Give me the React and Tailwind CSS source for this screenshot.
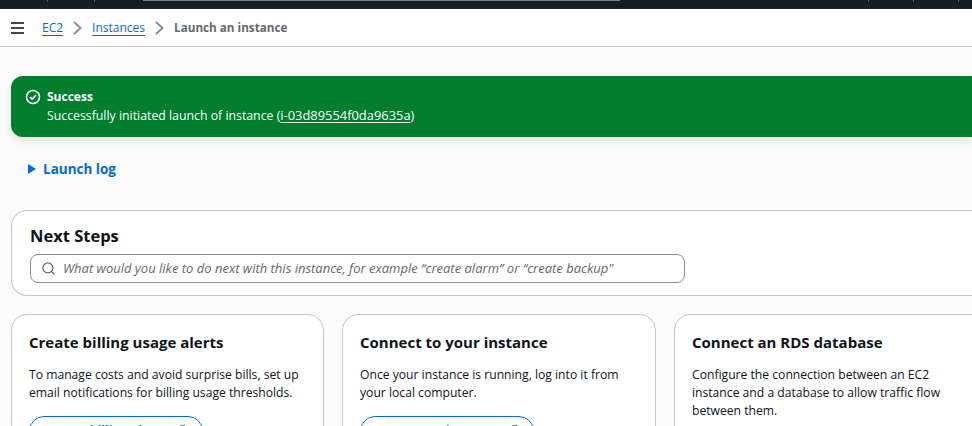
import { Search, ExternalLink } from 'lucide-react'

const Chevron = () => (
  <svg width="9" height="14" viewBox="0 0 9 14" fill="none" stroke="#8c8c94" strokeWidth="2" className="mx-[10px] shrink-0">
    <path d="M1 1l6.5 6L1 13" />
  </svg>
)

const Card = ({ title, children, button }) => (
  <div className="min-w-0 bg-white border border-[#c6c6cd] rounded-[16px] pl-[17px] pr-[14px] pt-[17px] h-[140px] overflow-hidden">
    <h3 className="text-[15px] leading-[20px] font-bold text-[#0f141a]">{title}</h3>
    <p className="mt-[14px] text-[12.15px] leading-[18px] text-[#0f141a]">{children}</p>
    {button && (
      <div className="mt-[14px] w-[174px] h-[30px] rounded-full border-[1.5px] border-[#006ce0] flex items-start justify-center gap-[6px] pt-[5px] text-[12.3px] leading-[18px] font-bold text-[#006ce0]">
        {button}
        <ExternalLink size={14} strokeWidth={2} className="mt-[2px]" />
      </div>
    )}
  </div>
)

export default function App() {
  return (
    <div className="w-[972px] h-[426px] overflow-hidden bg-[#fbfbfc] font-['Open_Sans',sans-serif]">
      <div className="h-[9px] bg-[#161d26] flex">
        <div className="ml-[47px] w-px h-[2px] bg-[#545b64]" />
        <div className="ml-[46px] w-px h-[2px] bg-[#545b64]" />
        <div className="ml-[48px] w-[477px] h-px bg-[#777f8a]" />
        <div className="ml-[248px] w-px h-[2px] bg-[#545b64]" />
        <div className="ml-[44px] w-px h-[2px] bg-[#545b64]" />
        <div className="ml-[44px] w-px h-[2px] bg-[#545b64]" />
      </div>
      <div className="h-[38px] bg-white border-b border-[#c6c6cd] flex items-center pl-[11px] text-[12px]">
        <svg width="13" height="12" viewBox="0 0 13 12" fill="none" stroke="#424650" strokeWidth="2" className="shrink-0">
          <path d="M0 1h13M0 6h13M0 11h13" />
        </svg>
        <a className="ml-[18px] text-[#006ce0] underline underline-offset-[3px]">EC2</a>
        <Chevron />
        <a className="text-[#006ce0] underline underline-offset-[3px]">Instances</a>
        <Chevron />
        <span className="font-bold text-[#656871] text-[11.7px]">Launch an instance</span>
      </div>

      <div className="pl-[11px] pt-[29px]">
        <div className="h-[61px] bg-[#007e2e] rounded-l-[12px] shadow-[0_4px_8px_rgba(0,7,22,0.1)] flex pl-[14px] pt-[12px] text-white text-[12.3px] leading-[18px]">
          <svg width="16" height="16" viewBox="0 0 16 16" fill="none" stroke="currentColor" strokeWidth="1.6" className="mt-[1px] shrink-0">
            <circle cx="8" cy="8" r="6.5" />
            <path d="M5 8l2.2 2.2L11 6" />
          </svg>
          <div className="ml-[6px]">
            <div className="font-bold text-[12px]">Success</div>
            <div>
              Successfully initiated launch of instance (<a className="underline underline-offset-[2px] text-[12.9px]">i-03d89554f0da9635a</a>)
            </div>
          </div>
        </div>

        <div className="mt-[22px] h-[20px] flex items-center pl-[17px] text-[#006ce0] text-[13.5px] font-bold">
          <svg width="8" height="10" viewBox="0 0 8 10" fill="currentColor"><path d="M0 0l8 5-8 5z" /></svg>
          <span className="ml-[7px]">Launch log</span>
        </div>

        <div className="mt-[31px] h-[86px] bg-white border border-r-0 border-[#c6c6cd] rounded-l-[16px] pl-[18px] pt-[14px]">
          <h2 className="text-[16.5px] leading-[22px] font-bold text-[#0f141a]">Next Steps</h2>
          <div className="mt-[7px] w-[655px] h-[29px] border border-[#8c8c94] rounded-[8px] flex items-center pl-[10px]">
            <Search size={15} strokeWidth={2} className="text-[#656871]" />
            <span className="ml-[7px] text-[13px] italic text-[#656871] whitespace-nowrap">
              What would you like to do next with this instance, for example “create alarm” or “create backup"
            </span>
          </div>
        </div>

        <div className="mt-[18px] grid grid-cols-[313px_314px_320px] gap-[18px] w-[983px]">
          <Card title="Create billing usage alerts" button="Create billing alerts">
            To manage costs and avoid surprise bills, set up email notifications for billing usage thresholds.
          </Card>
          <Card title="Connect to your instance" button="Connect to instance">
            Once your instance is running, log into it from your local computer.
          </Card>
          <Card title="Connect an RDS database">
            Configure the connection between an EC2 instance and a database to allow traffic flow between them.
          </Card>
        </div>
      </div>
    </div>
  )
}
